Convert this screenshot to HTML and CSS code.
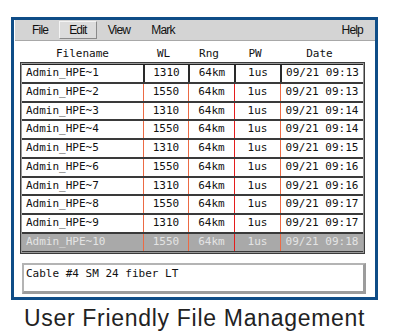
FILE: index.html
```html
<!DOCTYPE html>
<html lang="en">
<head>
    <meta charset="UTF-8">
    <title>File Management</title>
    <link rel="stylesheet" href="styles.css">
</head>
<body>
    <div class="frame">
        <div class="menubar">
            <span class="menu-item">File</span>
            <span class="menu-item active">Edit</span>
            <span class="menu-item">View</span>
            <span class="menu-item mark">Mark</span>
            <span class="menu-item help">Help</span>
        </div>
        <div class="head row">
            <span class="c-name">Filename</span>
            <span>WL</span>
            <span>Rng</span>
            <span>PW</span>
            <span>Date</span>
        </div>
        <div class="files">
            <div class="row first">
                <span class="c-name">Admin_HPE~1</span><span>1310</span><span>64km</span><span>1us</span><span>09/21 09:13</span>
            </div>
            <div class="row">
                <span class="c-name">Admin_HPE~2</span><span>1550</span><span>64km</span><span>1us</span><span>09/21 09:13</span>
            </div>
            <div class="row">
                <span class="c-name">Admin_HPE~3</span><span>1310</span><span>64km</span><span>1us</span><span>09/21 09:14</span>
            </div>
            <div class="row">
                <span class="c-name">Admin_HPE~4</span><span>1550</span><span>64km</span><span>1us</span><span>09/21 09:14</span>
            </div>
            <div class="row">
                <span class="c-name">Admin_HPE~5</span><span>1310</span><span>64km</span><span>1us</span><span>09/21 09:15</span>
            </div>
            <div class="row">
                <span class="c-name">Admin_HPE~6</span><span>1550</span><span>64km</span><span>1us</span><span>09/21 09:16</span>
            </div>
            <div class="row">
                <span class="c-name">Admin_HPE~7</span><span>1310</span><span>64km</span><span>1us</span><span>09/21 09:16</span>
            </div>
            <div class="row">
                <span class="c-name">Admin_HPE~8</span><span>1550</span><span>64km</span><span>1us</span><span>09/21 09:17</span>
            </div>
            <div class="row">
                <span class="c-name">Admin_HPE~9</span><span>1310</span><span>64km</span><span>1us</span><span>09/21 09:17</span>
            </div>
            <div class="row selected">
                <span class="c-name">Admin_HPE~10</span><span>1550</span><span>64km</span><span>1us</span><span>09/21 09:18</span>
            </div>
        </div>
        <div class="status">Cable #4 SM 24 fiber LT</div>
    </div>
    <div class="caption">User Friendly File Management</div>
</body>
</html>
```

FILE: styles.css
```css
body {
    margin: 0;
    padding: 0;
    background: #fff;
    font-family: "Liberation Sans", Arial, sans-serif;
}
.frame {
    margin: 17px 0 0 11px;
    width: 367px;
    height: 283px;
    box-sizing: border-box;
    border: 3px solid #0f4d87;
    background: #fff;
    display: flex;
    flex-direction: column;
}
.menubar {
    height: 20px;
    margin-left: 1px;
    background: #d4d4d4;
    border-bottom: 1px solid #a8a8a8;
    display: flex;
    align-items: center;
    padding-left: 16px;
    font-size: 12px;
    letter-spacing: -0.8px;
    color: #111;
}
.menu-item {
    margin-right: 10px;
    border: 1px solid transparent;
    padding: 1px 0;
}
.menu-item.active {
    padding: 1px 9px;
    background: #dcdcdc;
    border-color: #f4f4f4 #8a8a8a #8a8a8a #f4f4f4;
}
.menu-item.mark {
    margin-left: 9px;
}
.menu-item.help {
    margin-left: auto;
    margin-right: 11px;
}
.row {
    display: grid;
    grid-template-columns: 121px 45px 46px 46px 83px;
    font-family: "DejaVu Sans Mono", "Liberation Mono", monospace;
    font-size: 11px;
    color: #111;
}
.row span {
    text-align: center;
    line-height: 16.75px;
}
.row .c-name {
    text-align: left;
    padding-left: 4px;
}
.head {
    margin: 5px 0 0 6px;
    height: 16px;
}
.head span {
    line-height: 16px;
}
.head .c-name {
    text-align: center;
}
.files {
    margin: 0 10px 0 6px;
    border: 1px solid #3c3c3c;
    box-shadow: inset 0 0 0 1px #9a9a9a;
    padding: 1px;
}
.files .row {
    border-bottom: 2px solid #3a3a3a;
    background: #fff;
}
.files .row:last-child {
    border-bottom: 1px solid #3a3a3a;
}
.files .row span + span {
    border-left: 1px solid #ec6a44;
}
.files .row span:nth-child(4) {
    border-left-color: #e41c1c;
}
.files .row.first {
    border-top: 1px solid #222;
}
.files .row.first span + span {
    border-left: 2px solid #2a2a2a;
}
.files .row.selected {
    background: #a9a9a9;
    color: #e4e4e4;
}
.status {
    margin: 9px 9px 0 8px;
    height: 31px;
    box-sizing: border-box;
    border-style: solid;
    border-width: 2px 3px 3px 2px;
    border-color: #b4b4b4 #9c9c9c #9c9c9c #b4b4b4;
    padding: 1px 0 0 2px;
    font-family: "DejaVu Sans Mono", "Liberation Mono", monospace;
    font-size: 11px;
    line-height: 16px;
    color: #111;
}
.caption {
    width: 389px;
    margin-top: 5px;
    text-align: center;
    font-size: 23px;
    letter-spacing: 0.7px;
    color: #222;
}
```
